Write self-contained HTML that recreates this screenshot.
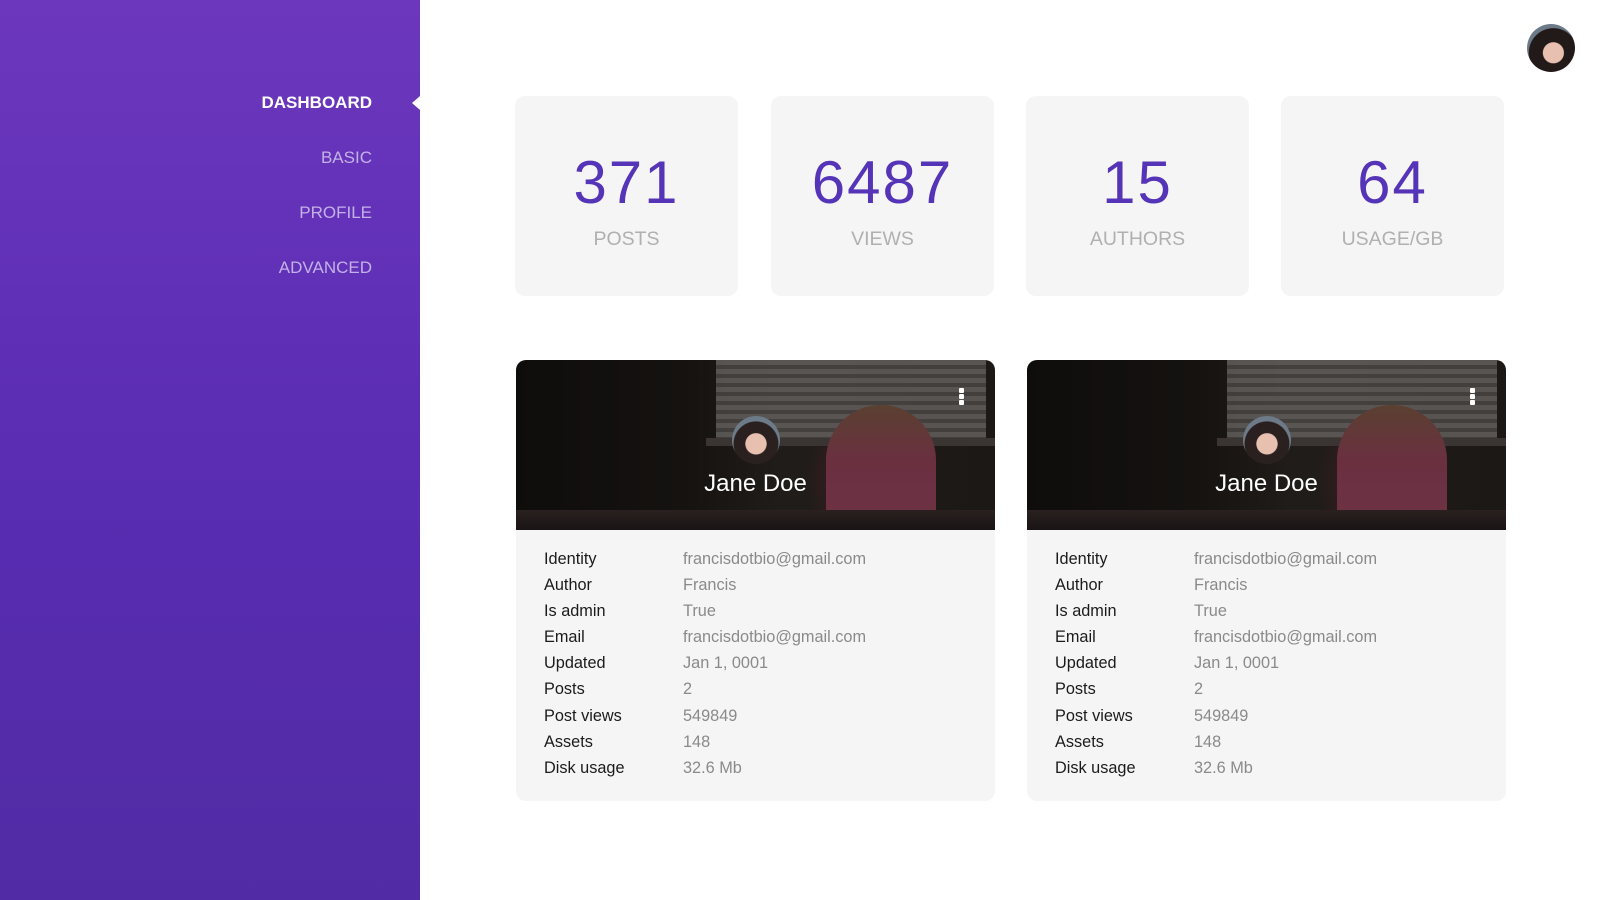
<!DOCTYPE html>
<html><head><meta charset="utf-8"><style>
*{margin:0;padding:0;box-sizing:border-box}
body{width:1600px;height:900px;overflow:hidden;background:#fff;font-family:"Liberation Sans",Roboto,sans-serif;position:relative}
.side{position:absolute;left:0;top:0;width:420px;height:900px;background:linear-gradient(180deg,#6c37bd 0%,#5a2db3 50%,#512ba5 100%)}
.nav{position:absolute;right:48px;font-size:17px;color:#c4b1e8;text-align:right}
.nav.a{color:#fff;font-weight:bold}
.tri{position:absolute;left:412px;top:96px;width:0;height:0;border-top:7px solid transparent;border-bottom:7px solid transparent;border-right:8px solid #fff}
.stat{position:absolute;top:96px;width:223px;height:200px;background:#f5f5f5;border-radius:10px;text-align:center}
.stat b{display:block;font-weight:normal;font-size:60px;color:#5534b8;margin-top:52px;line-height:70px;letter-spacing:2px}
.stat span{display:block;font-size:19.5px;color:#b0b0b0;margin-top:10px}
.card{position:absolute;top:360px;width:479px;height:441px;background:#f5f5f5;border-radius:10px;overflow:hidden}
.hero{position:absolute;left:0;top:0;width:479px;height:170px;background:
radial-gradient(ellipse 60px 80px at 350px 120px,#4a2a30 0%,rgba(60,30,35,.8) 50%,transparent 100%),
linear-gradient(90deg,#0f0d0c 0%,#151210 35%,#201c1a 55%,#1c1816 100%)}
.win{position:absolute;left:200px;top:0;width:270px;height:80px;background:repeating-linear-gradient(180deg,#6b6866 0 5px,#4f4c4a 5px 9px);opacity:.75}
.sill{position:absolute;left:190px;top:78px;width:290px;height:8px;background:#3a3432}
.person{position:absolute;left:310px;top:45px;width:110px;height:125px;border-radius:55px 55px 10px 10px;background:linear-gradient(180deg,#5a4030 0%,#6a3040 45%,#6e3245 100%)}
.table{position:absolute;left:0;top:150px;width:479px;height:20px;background:linear-gradient(180deg,#2a2020,#1a1414)}
.av{position:absolute;left:216px;top:56px;width:48px;height:48px;border-radius:50%;background:radial-gradient(circle at 50% 58%,#e8c0b0 0 28%,#2a2020 30% 60%,#6d7a88 62%)}
.name{position:absolute;left:0;right:0;top:110px;text-align:center;color:#fff;font-size:24px}
.keb{position:absolute;left:443px;top:28px;width:6px}
.keb i{display:block;width:5px;height:5px;background:#fff;border-radius:1px;margin-bottom:1px}
.rows{position:absolute;left:28px;top:186px;font-size:16.3px;line-height:26.1px}
.rows div{display:flex}
.rows .l{width:139px;color:#1b1b1b}
.rows .v{color:#8a8a8a}
.top{position:absolute;left:1535px;top:24px;width:48px;height:48px;border-radius:50%;background:radial-gradient(circle at 55% 60%,#e8c0b0 0 26%,#221a18 28% 62%,#6d7a88 64%)}
</style></head><body>
<div class="side">
<div class="nav a" style="top:93px">DASHBOARD</div>
<div class="nav" style="top:148px">BASIC</div>
<div class="nav" style="top:203px">PROFILE</div>
<div class="nav" style="top:258px">ADVANCED</div>
</div>
<div class="tri"></div>
<div class="top" style="left:1527px"></div>
<div class="stat" style="left:515px"><b>371</b><span>POSTS</span></div>
<div class="stat" style="left:771px"><b>6487</b><span>VIEWS</span></div>
<div class="stat" style="left:1026px"><b>15</b><span>AUTHORS</span></div>
<div class="stat" style="left:1281px"><b>64</b><span>USAGE/GB</span></div>

<div class="card" style="left:516px">
<div class="hero"><div class="win"></div><div class="sill"></div><div class="person"></div><div class="table"></div>
<div class="av"></div><div class="name">Jane Doe</div><div class="keb"><i></i><i></i><i></i></div></div>
<div class="rows">
<div><span class="l">Identity</span><span class="v">francisdotbio@gmail.com</span></div>
<div><span class="l">Author</span><span class="v">Francis</span></div>
<div><span class="l">Is admin</span><span class="v">True</span></div>
<div><span class="l">Email</span><span class="v">francisdotbio@gmail.com</span></div>
<div><span class="l">Updated</span><span class="v">Jan 1, 0001</span></div>
<div><span class="l">Posts</span><span class="v">2</span></div>
<div><span class="l">Post views</span><span class="v">549849</span></div>
<div><span class="l">Assets</span><span class="v">148</span></div>
<div><span class="l">Disk usage</span><span class="v">32.6 Mb</span></div>
</div></div>

<div class="card" style="left:1027px">
<div class="hero"><div class="win"></div><div class="sill"></div><div class="person"></div><div class="table"></div>
<div class="av"></div><div class="name">Jane Doe</div><div class="keb"><i></i><i></i><i></i></div></div>
<div class="rows">
<div><span class="l">Identity</span><span class="v">francisdotbio@gmail.com</span></div>
<div><span class="l">Author</span><span class="v">Francis</span></div>
<div><span class="l">Is admin</span><span class="v">True</span></div>
<div><span class="l">Email</span><span class="v">francisdotbio@gmail.com</span></div>
<div><span class="l">Updated</span><span class="v">Jan 1, 0001</span></div>
<div><span class="l">Posts</span><span class="v">2</span></div>
<div><span class="l">Post views</span><span class="v">549849</span></div>
<div><span class="l">Assets</span><span class="v">148</span></div>
<div><span class="l">Disk usage</span><span class="v">32.6 Mb</span></div>
</div></div>
</body></html>
